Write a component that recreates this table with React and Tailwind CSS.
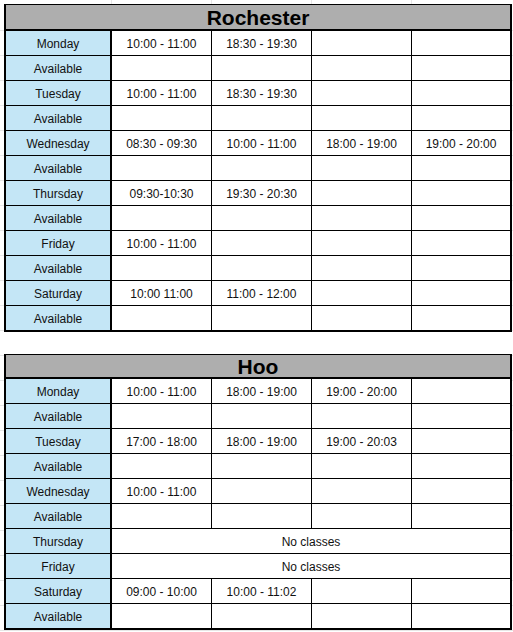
import React from "react";

const rochester = [
  { day: "Monday", times: ["10:00 - 11:00", "18:30 - 19:30"] },
  { day: "Available", times: [] },
  { day: "Tuesday", times: ["10:00 - 11:00", "18:30 - 19:30"] },
  { day: "Available", times: [] },
  { day: "Wednesday", times: ["08:30 - 09:30", "10:00 - 11:00", "18:00 - 19:00", "19:00 - 20:00"] },
  { day: "Available", times: [] },
  { day: "Thursday", times: ["09:30-10:30", "19:30 - 20:30"] },
  { day: "Available", times: [] },
  { day: "Friday", times: ["10:00 - 11:00"] },
  { day: "Available", times: [] },
  { day: "Saturday", times: ["10:00 11:00", "11:00 - 12:00"] },
  { day: "Available", times: [] },
];

const hoo = [
  { day: "Monday", times: ["10:00 - 11:00", "18:00 - 19:00", "19:00 - 20:00"] },
  { day: "Available", times: [] },
  { day: "Tuesday", times: ["17:00 - 18:00", "18:00 - 19:00", "19:00 - 20:03"] },
  { day: "Available", times: [] },
  { day: "Wednesday", times: ["10:00 - 11:00"] },
  { day: "Available", times: [] },
  { day: "Thursday", note: "No classes" },
  { day: "Friday", note: "No classes" },
  { day: "Saturday", times: ["09:00 - 10:00", "10:00 - 11:02"] },
  { day: "Available", times: [] },
];

function Row({ row, last }) {
  const rowClass = last
    ? "grid grid-cols-[106px_100px_100px_100px_98px] h-[24px]"
    : "grid grid-cols-[106px_100px_100px_100px_98px] h-[25px] border-b border-black";

  return (
    <div className={rowClass}>
      <div className="bg-[#c4e6f6] border-r-2 border-black flex items-center justify-center pt-[2px]">
        {row.day}
      </div>
      {row.note ? (
        <div className="col-span-4 bg-white flex items-center justify-center pt-[2px]">{row.note}</div>
      ) : (
        [0, 1, 2, 3].map((i) => (
          <div
            key={i}
            className={
              i < 3
                ? "bg-white border-r border-black flex items-center justify-center pt-[2px]"
                : "bg-white flex items-center justify-center pt-[2px]"
            }
          >
            {row.times[i] || ""}
          </div>
        ))
      )}
    </div>
  );
}

function Timetable({ title, rows, headerClass }) {
  return (
    <div className="w-[508px] border-2 border-t border-black">
      <div className={headerClass}>{title}</div>
      {rows.map((row, idx) => (
        <Row key={idx} row={row} last={idx === rows.length - 1} />
      ))}
    </div>
  );
}

export default function App() {
  return (
    <div className="w-[513px] h-[632px] overflow-hidden bg-white bg-[repeating-linear-gradient(180deg,transparent_0px,transparent_24px,#e6e6e6_24px,#e6e6e6_25px)] bg-position-[0px_6px] font-['Liberation_Sans',Arial,sans-serif] text-[12px] text-[#111]">
      {/* faint sheet gridlines above the first table */}
      <div className="h-[4px] pl-[4px] grid grid-cols-[108px_100px_100px_100px_100px]">
        <div className="border-r border-[#e6e6e6]" />
        <div className="border-r border-[#e6e6e6]" />
        <div className="border-r border-[#e6e6e6]" />
        <div className="border-r border-[#e6e6e6]" />
        <div />
      </div>

      <div className="pl-[4px]">
        <Timetable
          title="Rochester"
          rows={rochester}
          headerClass="h-[26px] bg-[#aeaeae] border-b-2 border-black flex items-center justify-center pt-[2px] text-[21px] font-bold text-black"
        />
      </div>

      <div className="pl-[4px] mt-[22px]">
        <Timetable
          title="Hoo"
          rows={hoo}
          headerClass="h-[24px] bg-[#aeaeae] border-b-2 border-black flex items-center justify-center pt-[2px] text-[21px] font-bold text-black"
        />
      </div>
    </div>
  );
}
